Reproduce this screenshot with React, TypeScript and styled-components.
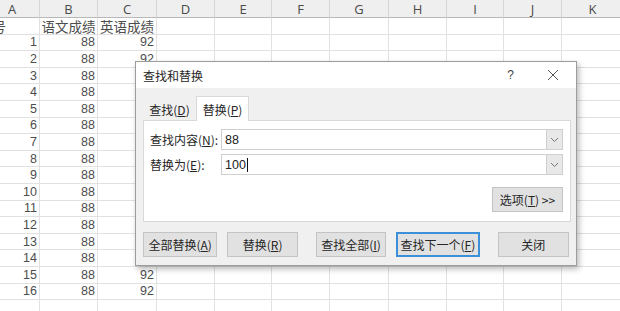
import styled, { createGlobalStyle } from 'styled-components'

const GlobalStyle = createGlobalStyle`
    html, body {
        margin: 0;
        padding: 0;
        background: #ffffff;
        overflow: hidden;
    }
    body {
        font-family: "Liberation Sans", "Noto Sans CJK SC", sans-serif;
    }
`

const columns = ['A', 'B', 'C', 'D', 'E', 'F', 'G', 'H', 'I', 'J', 'K']
const colWidths = [55, 58, 59, 58, 57, 58, 59, 58, 57, 58, 62]

const rows: string[][] = [
    ['学号', '语文成绩', '英语成绩'],
    ...Array.from({ length: 16 }, (_, i) => [String(i + 1), '88', '92']),
    [],
]

const App = () => {
    return (
        <Page>
            <GlobalStyle />
            <Sheet>
                {columns.map((c) => (
                    <HeadCell key={c}>{c}</HeadCell>
                ))}
                {rows.map((row, r) =>
                    columns.map((c, ci) => {
                        const value = row[ci] || ''
                        const isNum = r > 0
                        return (
                            <Cell key={`${r}-${c}`} $num={isNum} $first={ci === 0 && r === 0}>
                                {value}
                            </Cell>
                        )
                    })
                )}
            </Sheet>

            <Dialog>
                <TitleBar>
                    <Title>查找和替换</Title>
                    <HelpMark>?</HelpMark>
                    <CloseIcon width="12" height="12" viewBox="0 0 12 12">
                        <path d="M1 1 L11 11 M11 1 L1 11" stroke="#555" strokeWidth="1" fill="none" />
                    </CloseIcon>
                </TitleBar>
                <Body>
                    <Tabs>
                        <Tab>
                            查找(<u>D</u>)
                        </Tab>
                        <Tab $active>
                            替换(<u>P</u>)
                        </Tab>
                    </Tabs>
                    <Panel>
                        <FieldRow>
                            <Label>
                                查找内容(<u>N</u>):
                            </Label>
                            <Combo>
                                <ComboText>88</ComboText>
                                <DropButton>
                                    <Chevron />
                                </DropButton>
                            </Combo>
                        </FieldRow>
                        <FieldRow>
                            <Label>
                                替换为(<u>E</u>):
                            </Label>
                            <Combo>
                                <ComboText>
                                    100
                                    <Caret />
                                </ComboText>
                                <DropButton>
                                    <Chevron />
                                </DropButton>
                            </Combo>
                        </FieldRow>
                        <OptionsRow>
                            <Button $width={71}>
                                选项(<u>T</u>) &gt;&gt;
                            </Button>
                        </OptionsRow>
                    </Panel>
                    <ButtonRow>
                        <Button $width={75}>
                            全部替换(<u>A</u>)
                        </Button>
                        <Button $width={71} $ml={10}>
                            替换(<u>R</u>)
                        </Button>
                        <Button $width={71} $ml={18}>
                            查找全部(<u>I</u>)
                        </Button>
                        <Button $width={84} $ml={10} $focused>
                            查找下一个(<u>F</u>)
                        </Button>
                        <Button $width={72} $ml={18}>
                            关闭
                        </Button>
                    </ButtonRow>
                </Body>
            </Dialog>
        </Page>
    )
}

const Chevron = () => (
    <svg width="9" height="6" viewBox="0 0 9 6">
        <polyline points="1,1 4.5,4.5 8,1" stroke="#777" strokeWidth="1" fill="none" />
    </svg>
)

export default App

const Page = styled.div`
    position: relative;
    width: 620px;
    height: 311px;
    overflow: hidden;
`

const Sheet = styled.div`
    display: grid;
    grid-template-columns: ${colWidths.map((w) => `${w}px`).join(' ')};
    grid-template-rows: 18px;
    grid-auto-rows: 16.6px;
    margin-left: -15px;
`

const HeadCell = styled.div`
    box-sizing: border-box;
    background: #efefef;
    border-right: 1px solid #d6d6d6;
    border-bottom: 1px solid #b8b8b8;
    color: #4a4a4a;
    font-family: "Open Sans", sans-serif;
    font-size: 13px;
    display: flex;
    align-items: center;
    justify-content: center;
`

const Cell = styled.div<{ $num: boolean; $first: boolean }>`
    box-sizing: border-box;
    border-right: 1px solid #e1e1e1;
    border-bottom: 1px solid #e1e1e1;
    color: #4d4d4d;
    display: flex;
    align-items: center;
    justify-content: ${(p) => (p.$num ? 'flex-end' : p.$first ? 'flex-start' : 'center')};
    padding-right: ${(p) => (p.$num ? '2px' : '0')};
    text-indent: ${(p) => (p.$first ? '-6px' : '0')};
    font-family: ${(p) => (p.$num ? '"Liberation Sans", sans-serif' : '"Noto Sans CJK SC", sans-serif')};
    font-size: ${(p) => (p.$num ? '12.5px' : '13.5px')};
    white-space: nowrap;
    overflow: hidden;
`

const Dialog = styled.div`
    position: absolute;
    left: 135px;
    top: 61px;
    width: 442px;
    box-sizing: border-box;
    border: 1px solid #9c9c9c;
    background: #f0f0f0;
    box-shadow: 2px 3px 6px rgba(0, 0, 0, 0.28);
    font-family: "Noto Sans CJK SC", sans-serif;
    font-size: 12px;
    color: #262626;
`

const TitleBar = styled.div`
    height: 26px;
    background: #ffffff;
    display: flex;
    align-items: center;
    padding-left: 7px;
`

const Title = styled.div`
    flex: 1;
    font-size: 12px;
    color: #262626;
`

const HelpMark = styled.div`
    font-family: "Liberation Sans", sans-serif;
    font-size: 12px;
    color: #444;
    margin-right: 33px;
`

const CloseIcon = styled.svg`
    margin-right: 17px;
`

const Body = styled.div`
    padding: 8px 7px 8px 7px;
`

const Tabs = styled.div`
    display: flex;
    align-items: flex-end;
    height: 24px;
`

const Tab = styled.div<{ $active?: boolean }>`
    box-sizing: border-box;
    height: ${(p) => (p.$active ? '25px' : '22px')};
    width: 53px;
    margin-bottom: ${(p) => (p.$active ? '-1px' : '0')};
    display: flex;
    align-items: center;
    justify-content: center;
    background: ${(p) => (p.$active ? '#ffffff' : 'transparent')};
    border: 1px solid ${(p) => (p.$active ? '#d9d9d9' : 'transparent')};
    border-bottom: none;
    position: relative;
    z-index: 1;
    font-size: 12px;
`

const Panel = styled.div`
    box-sizing: border-box;
    width: 428px;
    height: 102px;
    background: #ffffff;
    border: 1px solid #d9d9d9;
    padding: 8px 6px 0 6px;
    display: flex;
    flex-direction: column;
    gap: 4px;
`

const FieldRow = styled.div`
    display: flex;
    align-items: center;
    height: 21px;
`

const Label = styled.div`
    width: 71px;
    font-size: 12px;
    white-space: nowrap;
`

const Combo = styled.div`
    box-sizing: border-box;
    width: 342px;
    height: 21px;
    border: 1px solid #cfcfcf;
    display: flex;
    align-items: stretch;
`

const ComboText = styled.div`
    flex: 1;
    display: flex;
    align-items: center;
    padding-left: 3px;
    font-family: "Liberation Sans", sans-serif;
    font-size: 12.5px;
    color: #222;
`

const Caret = styled.span`
    display: inline-block;
    width: 1px;
    height: 14px;
    background: #111;
    margin-left: 1px;
`

const DropButton = styled.div`
    width: 15px;
    background: #e8e8e8;
    border-left: 1px solid #cfcfcf;
    display: flex;
    align-items: center;
    justify-content: center;
`

const OptionsRow = styled.div`
    display: flex;
    justify-content: flex-end;
    margin-top: 8px;
    padding-right: 1px;
`

const ButtonRow = styled.div`
    display: flex;
    margin-top: 10px;
`

const Button = styled.div<{ $width: number; $ml?: number; $focused?: boolean }>`
    box-sizing: border-box;
    width: ${(p) => p.$width}px;
    height: 25px;
    margin-left: ${(p) => p.$ml || 0}px;
    background: #e1e1e1;
    border: ${(p) => (p.$focused ? '2px solid #3c8fd9' : '1px solid #c4c4c4')};
    display: flex;
    align-items: center;
    justify-content: center;
    font-size: 12px;
    color: #262626;
    white-space: nowrap;
`
